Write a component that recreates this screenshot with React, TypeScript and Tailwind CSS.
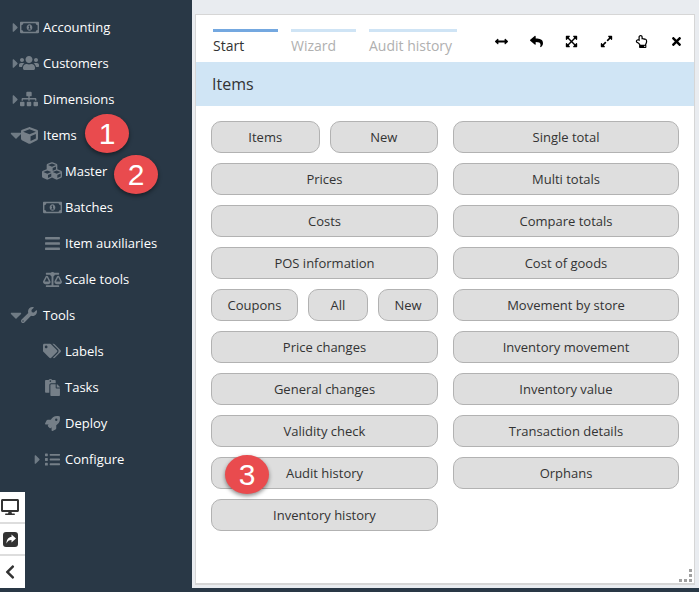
import React from 'react';
import {
  FaRegMoneyBillAlt, FaUsers, FaSitemap, FaCube, FaCubes, FaBars, FaBalanceScale, FaWrench, FaTags,
  FaPaste, FaRocket, FaList, FaDesktop, FaChevronLeft, FaArrowsAltH, FaReply,
  FaExpandArrowsAlt, FaExpandAlt, FaRegHandPointUp, FaTimes, FaCaretRight, FaCaretDown,
} from 'react-icons/fa';

type NavRow = { label: string; icon: React.ElementType; size: number; caret?: 'right' | 'down'; sub?: boolean; subCaret?: boolean };

const NAV: NavRow[] = [
  { label: 'Accounting', icon: FaRegMoneyBillAlt, size: 19, caret: 'right' },
  { label: 'Customers', icon: FaUsers, size: 20, caret: 'right' },
  { label: 'Dimensions', icon: FaSitemap, size: 18, caret: 'right' },
  { label: 'Items', icon: FaCube, size: 17, caret: 'down' },
  { label: 'Master', icon: FaCubes, size: 20, sub: true },
  { label: 'Batches', icon: FaRegMoneyBillAlt, size: 19, sub: true },
  { label: 'Item auxiliaries', icon: FaBars, size: 17, sub: true },
  { label: 'Scale tools', icon: FaBalanceScale, size: 19, sub: true },
  { label: 'Tools', icon: FaWrench, size: 16, caret: 'down' },
  { label: 'Labels', icon: FaTags, size: 18, sub: true },
  { label: 'Tasks', icon: FaPaste, size: 17, sub: true },
  { label: 'Deploy', icon: FaRocket, size: 15, sub: true },
  { label: 'Configure', icon: FaList, size: 15, sub: true, subCaret: true },
];

const Btn = ({ label, className = '' }: { label: string; className?: string }) => (
  <div className={`h-[32px] pt-[2px] flex items-center justify-center rounded-[10px] border border-[#b2b2b2] bg-[#dedede] text-[13px] text-[#333333] ${className}`}>
    {label}
  </div>
);

const Badge = ({ n, className }: { n: number; className: string }) => (
  <div className={`absolute w-[44px] h-[39px] rounded-[50%] bg-[#e94b4e] text-white flex items-center justify-center text-[30px] shadow-[0_2px_4px_rgba(0,0,0,0.45)] font-['Liberation_Sans',sans-serif] ${className}`}>
    {n}
  </div>
);

const Row = ({ row }: { row: NavRow }) => {
  const Icon = row.icon;
  return (
    <div className="h-9 flex items-center text-[13px] text-white">
      {row.caret && (
        <span className="w-[11px] ml-[10px] flex justify-center text-[#6f7b85]">
          {row.caret === 'right' ? <FaCaretRight size={15} className="shrink-0" /> : <FaCaretDown size={18} className="shrink-0" />}
        </span>
      )}
      {row.sub && (
        <span className="w-[11px] ml-[32px] flex justify-center text-[#6f7b85]">
          {row.subCaret && <FaCaretRight size={15} className="shrink-0" />}
        </span>
      )}
      <span className={`w-[18px] flex justify-center text-[#757f88] ${row.sub ? 'mr-[4px]' : 'ml-[-1px] mr-[5px]'}`}>
        <Icon size={row.size} className="shrink-0" />
      </span>
      <span className="mt-[2px]">{row.label}</span>
    </div>
  );
};

export default function App() {
  return (
    <div className="relative w-[699px] h-[592px] overflow-hidden flex bg-[#293846] font-['Open_Sans',sans-serif]">
      {/* sidebar */}
      <div className="w-[192px] shrink-0 flex flex-col pt-[9px]">
        {NAV.map((r) => (
          <Row key={r.label} row={r} />
        ))}
        <div className="mt-[15px] w-[25px] bg-white flex flex-col text-[#333]">
          <div className="h-[32px] pr-[5px] flex items-center justify-center border-b-2 border-[#dddddd]"><FaDesktop size={18} /></div>
          <div className="h-[32px] pr-[5px] flex items-center justify-center border-b-2 border-[#dddddd]">
            <svg width="15" height="15" viewBox="0 0 15 15">
              <rect width="15" height="15" rx="3" fill="#333333" />
              <path d="M8.5 2.5 L13 6.5 L8.5 10.5 V8 C6 8 4.5 9 3.5 11.5 C3.5 7.5 5.5 5 8.5 5 Z" fill="#ffffff" />
            </svg>
          </div>
          <div className="h-[32px] pr-[5px] flex items-center justify-center"><FaChevronLeft size={16} /></div>
        </div>
      </div>

      {/* main */}
      <div className="flex-1 h-[588px] bg-[#e9ecf0] pt-[14px] pl-[3px] pr-[4px] pb-[3px]">
        <div className="h-full border border-b-2 border-[#d6d6d6] bg-white flex flex-col relative">
          <div className="h-[47px] shrink-0 flex items-start pl-[17px]">
            <div className="w-[65px] mt-[14px] border-t-[3px] border-[#74a8e0] pt-[3px] text-[14px] text-[#333]">Start</div>
            <div className="w-[65px] ml-[13px] mt-[14px] border-t-[3px] border-[#cfe4f5] pt-[3px] text-[14px] text-[#b0b0b0]">Wizard</div>
            <div className="w-[88px] ml-[13px] mt-[14px] border-t-[3px] border-[#cfe4f5] pt-[3px] text-[14px] text-[#b0b0b0]">Audit history</div>
            <div className="ml-[27px] mt-[20px] flex items-center text-black">
              <span className="w-[35px] flex justify-center"><FaArrowsAltH size={13} /></span>
              <span className="w-[35px] flex justify-center"><FaReply size={13} /></span>
              <span className="w-[35px] flex justify-center"><FaExpandArrowsAlt size={13} /></span>
              <span className="w-[35px] flex justify-center"><FaExpandAlt size={13} /></span>
              <span className="w-[35px] flex justify-center"><FaRegHandPointUp size={13} /></span>
              <span className="w-[35px] flex justify-center"><FaTimes size={13} /></span>
            </div>
          </div>
          <div className="h-[44px] shrink-0 bg-[#d0e5f5] flex items-center pl-[16px] text-[16px] text-[#333]">Items</div>

          <div className="pt-[15px] pl-[15px] grid grid-cols-[227px_226px] gap-x-[15px]">
            <div className="flex flex-col gap-[10px]">
              <div className="flex gap-[10px]">
                <Btn label="Items" className="flex-1" />
                <Btn label="New" className="flex-1" />
              </div>
              <Btn label="Prices" />
              <Btn label="Costs" />
              <Btn label="POS information" />
              <div className="flex gap-[10px]">
                <Btn label="Coupons" className="w-[87px]" />
                <Btn label="All" className="w-[60px]" />
                <Btn label="New" className="w-[60px]" />
              </div>
              <Btn label="Price changes" />
              <Btn label="General changes" />
              <Btn label="Validity check" />
              <Btn label="Audit history" />
              <Btn label="Inventory history" />
            </div>
            <div className="flex flex-col gap-[10px]">
              <Btn label="Single total" />
              <Btn label="Multi totals" />
              <Btn label="Compare totals" />
              <Btn label="Cost of goods" />
              <Btn label="Movement by store" />
              <Btn label="Inventory movement" />
              <Btn label="Inventory value" />
              <Btn label="Transaction details" />
              <Btn label="Orphans" />
            </div>
          </div>

          {/* resize grip */}
          <div className="absolute right-[2px] bottom-[1px] grid grid-cols-3 gap-[2px]">
            <span className="w-[3px] h-[3px]" /><span className="w-[3px] h-[3px]" /><span className="w-[3px] h-[3px] bg-[#a0a0a0]" />
            <span className="w-[3px] h-[3px]" /><span className="w-[3px] h-[3px]" /><span className="w-[3px] h-[3px] bg-[#a0a0a0]" />
            <span className="w-[3px] h-[3px] bg-[#a0a0a0]" /><span className="w-[3px] h-[3px] bg-[#a0a0a0]" /><span className="w-[3px] h-[3px] bg-[#a0a0a0]" />
          </div>
        </div>
      </div>

      <Badge n={1} className="left-[85px] top-[114px]" />
      <Badge n={2} className="left-[114px] top-[155px]" />
      <Badge n={3} className="left-[225px] top-[455px]" />
    </div>
  );
}
